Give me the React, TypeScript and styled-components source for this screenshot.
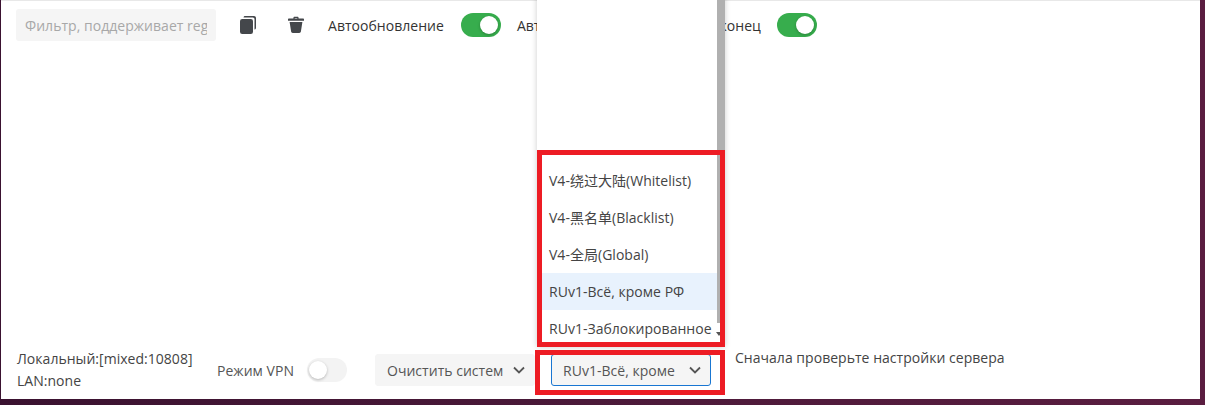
import { createGlobalStyle, styled } from "styled-components";

const OPTIONS = [
  "V4-绕过大陆(Whitelist)",
  "V4-黑名单(Blacklist)",
  "V4-全局(Global)",
  "RUv1-Всё, кроме РФ",
  "RUv1-Заблокированное",
];

const GlobalStyle = createGlobalStyle`
  html, body {
    margin: 0;
    padding: 0;
    height: 405px;
    overflow: hidden;
    background: linear-gradient(90deg, #3a1230 0%, #4d1a3a 55%, #5a1d40 100%);
    font-family: "Open Sans", "Noto Sans CJK SC", sans-serif;
    letter-spacing: 0.03px;
  }
`;

const Page = styled.div`
  height: 405px;
  padding: 0 5px 6px 1px;
  box-sizing: border-box;
`;

const Window = styled.div`
  height: 100%;
  background: #fff;
  border-top: 1px solid #e8e8e8;
  box-sizing: border-box;
  display: flex;
  flex-direction: column;
  justify-content: space-between;
  color: #333;
  font-size: 14px;
`;

const Toolbar = styled.div`
  display: flex;
  align-items: center;
  height: 32px;
  padding: 8px 0 0 15px;
`;

const FilterInput = styled.input`
  width: 200px;
  height: 32px;
  box-sizing: border-box;
  border: 0;
  border-radius: 3px;
  padding: 0 9px;
  background: #f5f5f5;
  font: inherit;
  letter-spacing: inherit;
  outline: none;

  &::placeholder {
    color: #a8a8a8;
  }
`;

const IconButton = styled.span`
  display: flex;
  width: 16px;
  height: 18px;
  margin-left: ${(p: { $gap: number }) => p.$gap}px;
  color: #44474b;
`;

const Label = styled.span`
  margin-left: ${(p: { $gap?: number }) => p.$gap ?? 0}px;
  white-space: nowrap;
`;

const WideLabel = styled(Label)`
  width: 244px;
  text-align-last: justify;
`;

const Track = styled.span<{ $on?: boolean; $gap: number }>`
  position: relative;
  flex: none;
  width: 40px;
  height: 24px;
  margin-left: ${(p) => p.$gap}px;
  border-radius: 12px;
  background: ${(p) => (p.$on ? "#37ad4d" : "#f3f3f3")};
`;

const Knob = styled.span<{ $on?: boolean }>`
  position: absolute;
  top: 3px;
  left: ${(p) => (p.$on ? "19px" : "2px")};
  width: 18px;
  height: 18px;
  border-radius: 50%;
  background: #fff;
  box-shadow: 0 1px 3px rgba(0, 0, 0, 0.25);
`;

const BottomBar = styled.div`
  display: flex;
  align-items: center;
  padding: 0 0 7px 16px;
`;

const PortInfo = styled.div`
  width: 200px;
  line-height: 22px;
  color: #444;
`;

const VpnGroup = styled.div`
  display: flex;
  align-items: center;
  height: 32px;
  color: #555;
`;

const Select = styled.div<{ $open?: boolean; $gap: number }>`
  position: relative;
  flex: none;
  display: flex;
  align-items: center;
  justify-content: space-between;
  width: 160px;
  height: 32px;
  box-sizing: border-box;
  margin-left: ${(p) => p.$gap}px;
  padding: 0 8px 0 11px;
  border-radius: 3px;
  background: #f5f5f5;
  border: 1px solid ${(p) => (p.$open ? "#1976d2" : "#f5f5f5")};
  color: #555;
`;

const SelectText = styled.span`
  overflow: hidden;
  white-space: nowrap;
  width: 116px;
`;

const Hint = styled.span`
  align-self: flex-start;
  margin-left: 24px;
  line-height: 20px;
  color: #444;
`;

const Menu = styled.div`
  position: absolute;
  left: -15px;
  bottom: 38px;
  width: 188px;
  height: 370px;
  box-sizing: border-box;
  background: #fff;
  box-shadow: 0 0 6px rgba(0, 0, 0, 0.2);
  display: flex;
  flex-direction: column;
  justify-content: flex-end;
  padding: 0 8px 0 4px;
  color: #444;
`;

const Option = styled.div<{ $active?: boolean }>`
  height: 37px;
  flex: none;
  line-height: 37px;
  padding-left: 8px;
  white-space: nowrap;
  background: ${(p) => (p.$active ? "#e8f2fd" : "transparent")};
`;

const ScrollThumb = styled.div`
  position: absolute;
  top: 0;
  right: 0;
  width: 8px;
  height: 346px;
  background: #b0b0b0;
`;

const ScrollArrow = styled.div`
  position: absolute;
  right: 3px;
  bottom: 11px;
  width: 0;
  height: 0;
  border-left: 3px solid transparent;
  border-right: 3px solid transparent;
  border-top: 4px solid #555;
`;

const RedFrame = styled.div<{ $x: number; $y: number; $w: number; $h: number }>`
  position: absolute;
  left: ${(p) => p.$x}px;
  top: ${(p) => p.$y}px;
  width: ${(p) => p.$w}px;
  height: ${(p) => p.$h}px;
  box-sizing: border-box;
  border: 5px solid #ed1c24;
  pointer-events: none;
`;

const ChevronBox = styled.svg`
  flex: none;
`;

const CopyIcon = () => (
  <svg width="16" height="18" viewBox="0 0 16 18" fill="currentColor">
    <path d="M3.5 1.5C3.5.7 4.2 0 5 0h9c1.1 0 2 .9 2 2v10c0 .8-.7 1.5-1.5 1.5V3.2c0-.9-.7-1.7-1.7-1.7H3.5z" />
    <rect x="0" y="3" width="13" height="15" rx="2.2" />
  </svg>
);

const TrashIcon = () => (
  <svg width="16" height="18" viewBox="0 0 16 18" fill="currentColor">
    <path d="M5.4 2.6V2c0-.7.5-1.2 1.2-1.2h2.8c.7 0 1.2.5 1.2 1.2v.6H15c.6 0 1 .4 1 1v1.2H0V3.6c0-.6.4-1 1-1h4.4zM6.7 2v.6h2.6V2H6.7z" />
    <path d="M1.6 6h12.8l-1.5 9.6c-.1.8-.8 1.4-1.6 1.4H4.7c-.8 0-1.5-.6-1.6-1.4L1.6 6z" />
  </svg>
);

const Chevron = () => (
  <ChevronBox width="14" height="14" viewBox="0 0 14 14" fill="none" stroke="#555" strokeWidth="1.8">
    <path d="M2 4.5 7 9.5 12 4.5" />
  </ChevronBox>
);

const App = () => {
  return (
    <Page>
      <GlobalStyle />
      <Window>
        <Toolbar>
          <FilterInput placeholder="Фильтр, поддерживает regex" />
          <IconButton $gap={24}>
            <CopyIcon />
          </IconButton>
          <IconButton $gap={32}>
            <TrashIcon />
          </IconButton>
          <Label $gap={24}>Автообновление</Label>
          <Track $on $gap={17}>
            <Knob $on />
          </Track>
          <WideLabel $gap={16}>Автоматическая прокрутка в конец</WideLabel>
          <Track $on $gap={16}>
            <Knob $on />
          </Track>
        </Toolbar>
        <BottomBar>
          <PortInfo>
            Локальный:[mixed:10808]
            <br />
            LAN:none
          </PortInfo>
          <VpnGroup>
            <Label>Режим VPN</Label>
            <Track $gap={13}>
              <Knob />
            </Track>
          </VpnGroup>
          <Select $gap={28}>
            <SelectText>Очистить систем</SelectText>
            <Chevron />
          </Select>
          <Select $open $gap={16}>
            <SelectText>RUv1-Всё, кроме РФ</SelectText>
            <Chevron />
            <Menu>
              {OPTIONS.map((o) => (
                <Option key={o} $active={o === "RUv1-Всё, кроме РФ"}>
                  {o}
                </Option>
              ))}
              <ScrollThumb />
              <ScrollArrow />
            </Menu>
          </Select>
          <Hint>Сначала проверьте настройки сервера</Hint>
        </BottomBar>
      </Window>
      <RedFrame $x={537} $y={150} $w={188} $h={197} />
      <RedFrame $x={535} $y={350} $w={190} $h={45} />
    </Page>
  );
};

export default App;
